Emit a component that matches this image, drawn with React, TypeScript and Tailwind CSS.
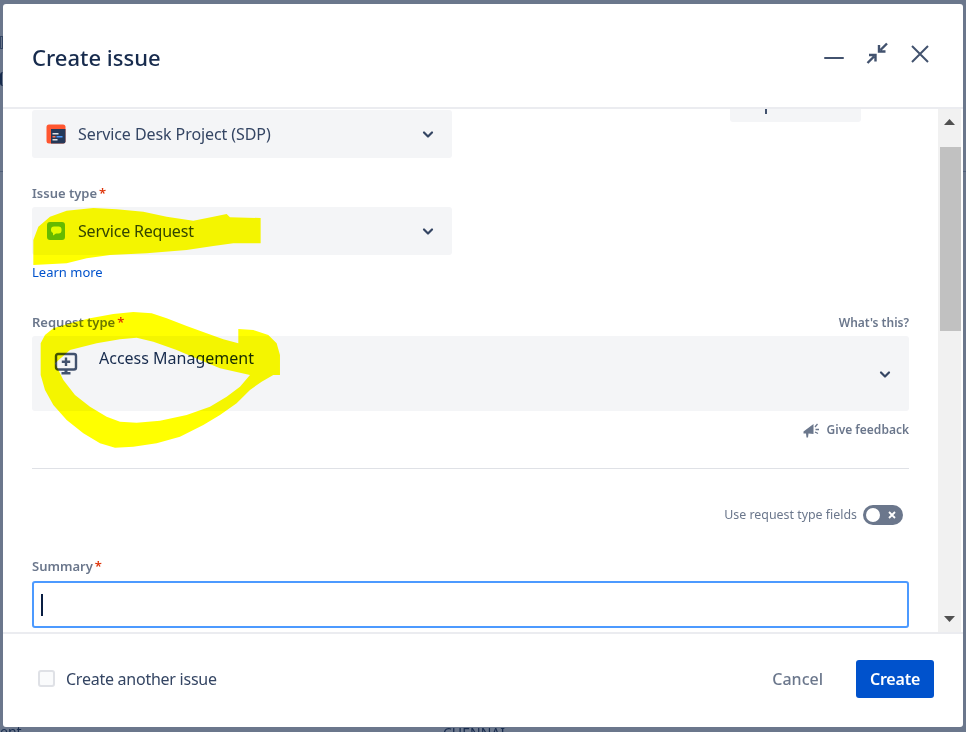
import React from 'react';

const font = { fontFamily: '"Noto Sans", "Open Sans", sans-serif' };

const Chevron: React.FC = () => (
  <svg width="24" height="24" viewBox="0 0 24 24" className="text-[#344563]">
    <path d="M8 10.5l4 4 4-4" fill="none" stroke="currentColor" strokeWidth="2.2" strokeLinecap="round" strokeLinejoin="round" />
  </svg>
);

const ProjectIcon: React.FC = () => (
  <svg width="20" height="20" viewBox="0 0 20 20">
    <rect x="0.5" y="0.5" width="19" height="19" rx="2.5" fill="#ff5630" />
    <path d="M5 5h14.500V17.500a2 2 0 0 1-2 2H5z" fill="#253858" />
    <rect x="6.500" y="9" width="6" height="1.500" fill="#dfe1e6" />
    <rect x="6.500" y="12" width="3" height="1.500" fill="#ff7452" />
    <rect x="10.500" y="12" width="6" height="1.500" fill="#4c9aff" />
    <rect x="6.500" y="15" width="5" height="1.500" fill="#dfe1e6" />
  </svg>
);

const RequestIcon: React.FC = () => (
  <svg width="18" height="18" viewBox="0 0 18 18">
    <rect width="18" height="18" rx="3" fill="#65ba00" />
    <path d="M7 4.500h4.500a3 3 0 0 1 3 3v1a3 3 0 0 1-3 3H9l-3 2v-2.400a3 3 0 0 1-2-2.600v-1a3 3 0 0 1 3-3z" fill="#e3fcbf" />
  </svg>
);

const MonitorPlusIcon: React.FC = () => (
  <svg width="24" height="24" viewBox="0 0 24 24" className="text-[#42526e]">
    <rect x="2" y="2" width="20" height="15.500" rx="2" fill="none" stroke="currentColor" strokeWidth="2.400" />
    <path d="M12 5.500v8.500M7.800 9.800h8.400" stroke="currentColor" strokeWidth="2.400" />
    <path d="M10.500 17.500h3v3h-3z M7.500 20h9v2.400h-9z" fill="currentColor" />
  </svg>
);

const Label: React.FC<{ text: string }> = ({ text }) => (
  <span className="mt-[-2px] text-[13px] leading-[16px] font-semibold text-[#6b778c]">
    {text}
    <span className="ml-[2px] text-[#de350b]">*</span>
  </span>
);

export default function App() {
  return (
    <div className="relative h-[732px] w-[966px] overflow-hidden bg-[#6b778c]" style={font}>
      {/* page behind the dialog */}
      <span className="absolute left-[443px] top-[725px] text-[14px] leading-[16px] text-[#172b4d]">CHENNAI</span>
      <span className="absolute left-[0px] top-[724px] text-[14px] leading-[16px] text-[#172b4d]">ent</span>
      <span className="absolute left-[0px] top-[36px] h-[13px] w-[3px] border border-[#344563]" />
      <span className="absolute left-[0px] top-[72px] h-[14px] w-[3px] rounded-l-full border-l-2 border-[#172b4d]" />
      <span className="absolute left-[0px] top-[171px] h-px w-[3px] bg-[#505f79]" />
      <span className="absolute left-[963px] top-[171px] h-px w-[3px] bg-[#505f79]" />

      <div className="relative ml-[3px] mt-[4px] flex h-[723px] w-[960px] flex-col overflow-hidden rounded-[3px] bg-white">
        <header className="flex h-[105px] shrink-0 items-center justify-between border-b-2 border-[#ebecf0] pb-[2px] pl-[29px] pr-[33px]">
          <h1 className="mt-[5px] text-[22px] font-medium leading-[28px] text-[#172b4d]">Create issue</h1>
          <div className="flex items-center text-[#42526e]">
            <svg width="20" height="4" viewBox="0 0 20 4" className="mt-[6px]">
              <path d="M1 2h18" stroke="currentColor" strokeWidth="2" strokeLinecap="round" />
            </svg>
            <svg width="24" height="24" viewBox="0 0 24 24" className="ml-[21px] mt-[-3px]">
              <path d="M22 2.500l-6.500 6.500M14 4v6.500h6.500" fill="none" stroke="currentColor" strokeWidth="2.400" />
              <path d="M2.500 22L9 15.500M4 14h6.500v6.500" fill="none" stroke="currentColor" strokeWidth="2.400" />
            </svg>
            <svg width="20" height="20" viewBox="0 0 20 20" className="ml-[21px] mt-[-2px]">
              <path d="M2 2l16 16M18 2L2 18" stroke="currentColor" strokeWidth="2" />
            </svg>
          </div>
        </header>

        <div className="flex min-h-0 flex-1">
          <main className="min-w-0 flex-1 pl-[29px] pr-[29px] pt-px">
            <div className="flex items-start">
              <div className="flex h-[48px] w-[420px] items-center rounded-[3px] bg-[#f4f5f7] pl-[14px] pr-[12px]">
                <ProjectIcon />
                <span className="ml-[12px] flex-1 text-[16px] tracking-[-0.08px] text-[#344563]">Service Desk Project (SDP)</span>
                <Chevron />
              </div>
              <div className="ml-[278px] mt-[-1px] flex h-[13px] w-[131px] justify-center rounded-b-[3px] bg-[#f4f5f7]">
                <span className="mr-[60px] h-[5px] w-[2px] bg-[#42526e]" />
              </div>
            </div>

            <div className="mt-[28px] flex h-[16px] items-center">
              <Label text="Issue type" />
            </div>
            <div className="mt-[5px] flex h-[48px] w-[420px] items-center rounded-[3px] bg-[#f4f5f7] pl-[15px] pr-[12px]">
              <RequestIcon />
              <span className="ml-[13px] flex-1 text-[16px] tracking-[-0.2px] text-[#344563]">Service Request</span>
              <Chevron />
            </div>
            <a className="mt-[8px] block text-[13px] leading-[18px] text-[#0052cc]">Learn more</a>

            <div className="mt-[34px] flex h-[16px] items-center justify-between">
              <Label text="Request type" />
              <span className="text-[12px] font-semibold leading-[16px] text-[#6b778c]">What's this?</span>
            </div>
            <div className="mt-[5px] flex h-[75px] items-center rounded-[3px] bg-[#f4f5f7] pr-[12px]">
              <div className="flex h-full flex-1 items-start pl-[22px]">
                <div className="mt-[16px]">
                  <MonitorPlusIcon />
                </div>
                <span className="ml-[21px] mt-[8px] text-[16px] leading-[28px] text-[#172b4d]">Access Management</span>
              </div>
              <Chevron />
            </div>
            <div className="mt-[9px] flex items-center justify-end">
              <svg width="17" height="15" viewBox="0 0 17 15" className="mr-[1px] text-[#6b778c]">
                <path d="M0.500 8.500L10.500 1v10L5.500 10.500 5 14.500H3.500L3 10.500 0.500 10.500z" fill="currentColor" />
                <path d="M12 4l2.500-3M12.500 6.500H16M12 9l3 1.500" stroke="currentColor" strokeWidth="1.300" fill="none" />
              </svg>
              <span className="ml-[6px] text-[12px] font-semibold leading-[20px] text-[#6b778c]">Give feedback</span>
            </div>
            <div className="mt-[28px] h-px bg-[#dfe1e6]" />

            <div className="mt-[36px] flex h-[20px] items-center justify-end pr-[6px]">
              <span className="text-[12.4px] text-[#6b778c]">Use request type fields</span>
              <span className="relative ml-[6px] flex h-[20px] w-[40px] items-center rounded-full bg-[#6b778c] pl-[3px]">
                <span className="h-[14px] w-[14px] rounded-full bg-white" />
                <svg width="10" height="10" viewBox="0 0 10 10" className="ml-[7px] text-white">
                  <path d="M2 2l6 6M8 2L2 8" stroke="currentColor" strokeWidth="1.800" />
                </svg>
              </span>
            </div>

            <div className="mt-[34px] flex h-[16px] items-center">
              <Label text="Summary" />
            </div>
            <div className="mt-[6px] flex h-[47px] items-center rounded-[3px] border-2 border-[#4c9aff] bg-white pl-[7px]">
              <span className="h-[22px] w-[2px] bg-[#091e42]" />
            </div>
          </main>

          <aside className="relative mr-[2px] flex w-[23px] shrink-0 flex-col items-center bg-[#f1f1f1]">
            <svg width="11" height="6" viewBox="0 0 11 6" className="mt-[10px] text-[#505050]">
              <path d="M5.500 0L11 6H0z" fill="currentColor" />
            </svg>
            <div className="ml-[2px] mt-[22px] h-[184px] w-[21px] bg-[#c1c1c1]" />
            <svg width="11" height="6" viewBox="0 0 11 6" className="mt-auto mb-[10px] text-[#505050]">
              <path d="M5.500 6L11 0H0z" fill="currentColor" />
            </svg>
          </aside>
        </div>

        <footer className="flex h-[95px] shrink-0 items-center justify-between border-t-2 border-[#ebecf0] pb-[4px] pl-[35px] pr-[29px]">
          <label className="flex items-center">
            <span className="h-[17px] w-[17px] rounded-[3px] border-2 border-[#dfe1e6] bg-[#fafbfc]" />
            <span className="ml-[11px] text-[16px] tracking-[-0.25px] text-[#344563]">Create another issue</span>
          </label>
          <div className="flex items-center">
            <button className="text-[16px] font-medium text-[#6b778c]">Cancel</button>
            <button className="ml-[33px] h-[38px] w-[78px] rounded-[3px] bg-[#0052cc] text-[16px] font-semibold tracking-[-0.2px] text-white">Create</button>
          </div>
        </footer>
      </div>

      {/* marker scribbles drawn on the screenshot */}
      <svg width="966" height="732" viewBox="0 0 966 732" className="pointer-events-none absolute left-0 top-0 mix-blend-multiply">
        <path
          transform="scale(0.3333)"
          d="M100 795L100 720 115 680 150 650 200 632 280 624 350 628 430 635 500 650 580 662 640 650 680 642 690 652 782 654 782 730 700 730 640 738 560 750 440 760 330 765 260 775 200 790Z"
          fill="#ffff00"
        />
        <path
          transform="translate(20 300) scale(0.3333)"
          fillRule="evenodd"
          d="M62 130L75 105 100 85 150 70 210 55 280 42 340 36 395 40 440 55 500 78 560 100 610 118 655 130 655 87 700 90 745 105 770 130 780 165 780 225 760 225 725 245 690 270 650 310 600 345 550 375 480 410 410 430 340 440 285 443 240 430 190 400 140 360 100 315 75 270 62 225Z M105 190L150 150 230 130 300 118 350 113 400 125 470 150 540 180 600 205 690 225 660 260 620 290 570 320 500 345 420 362 350 368 300 365 260 350 210 320 165 285 130 240Z"
          fill="#ffff00"
        />
      </svg>
    </div>
  );
}
